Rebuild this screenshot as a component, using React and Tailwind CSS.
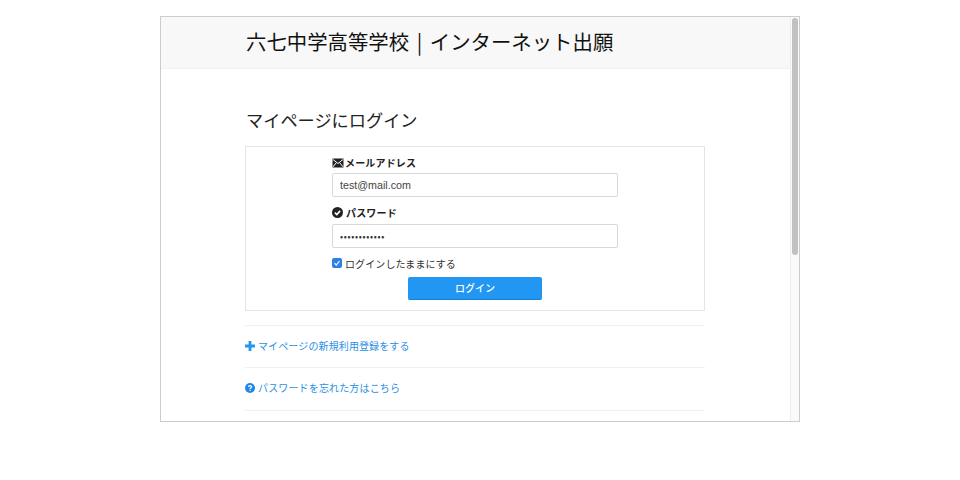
const jp = "font-['Noto_Sans_CJK_JP','Liberation_Sans',sans-serif]";

function Mail() {
  return (
    <svg width="12" height="10" viewBox="0 0 12 10" className="shrink-0">
      <rect x="0.5" y="0.5" width="11" height="9" fill="#222" />
      <path d="M1 1.5 L6 5.5 L11 1.5 M1 8.8 L4.4 4.6 M11 8.8 L7.6 4.6" fill="none" stroke="#fff" strokeWidth="1" />
    </svg>
  );
}

function CheckCircle() {
  return (
    <svg width="11" height="11" viewBox="0 0 11 11" className="shrink-0">
      <circle cx="5.5" cy="5.5" r="5.5" fill="#222" />
      <path d="M2.9 5.6 L4.8 7.5 L8.1 3.9" fill="none" stroke="#fff" strokeWidth="1.6" />
    </svg>
  );
}

function Plus() {
  return (
    <svg width="10" height="10" viewBox="0 0 10 10" className="shrink-0">
      <path d="M3.6 0h2.8v3.6H10v2.8H6.4V10H3.6V6.4H0V3.6h3.6z" fill="#2196f3" />
    </svg>
  );
}

function Question() {
  return (
    <svg width="10" height="10" viewBox="0 0 10 10" className="shrink-0">
      <circle cx="5" cy="5" r="5" fill="#1e88e5" />
      <path d="M3.5 3.9 C3.5 2.2 6.6 2.2 6.6 3.8 C6.6 4.9 5 4.9 5 6" fill="none" stroke="#fff" strokeWidth="1.2" />
      <rect x="4.4" y="6.7" width="1.2" height="1.2" fill="#fff" />
    </svg>
  );
}

export default function App() {
  return (
    <div className={`${jp} h-[480px] bg-white pt-4 text-[#222]`}>
      <div className="mx-auto flex h-[406px] w-[640px] overflow-hidden border border-[#cccccc]">
        <main className="flex-1 overflow-hidden">
          <header className="h-[52px] border-b border-[#f0f0f0] bg-[#f8f8f8] pl-[85px]">
            <h1 className="text-[20.4px] leading-[49px] font-normal whitespace-nowrap text-[#111] [word-spacing:3px]">
              六七中学高等学校 | インターネット出願
            </h1>
          </header>
          <div className="ml-[84px] w-[460px]">
            <h2 className="mt-[37px] h-[40px] pl-px text-[17.2px] leading-[28px] font-normal text-[#222]">
              マイページにログイン
            </h2>
            <section className="flex h-[165px] flex-col border border-[#e4e4e4] pt-[8px] pl-[86px]">
              <label className="flex h-[15px] items-center gap-[1px] text-[10px] font-bold tracking-[0.17px]">
                <Mail />
                メールアドレス
              </label>
              <input
                readOnly
                value="test@mail.com"
                className="mt-[3px] h-[24px] w-[286px] rounded-[2px] border border-[#d8d8d8] px-[7px] font-['Liberation_Sans',sans-serif] text-[10.7px] text-[#444] outline-none"
              />
              <label className="mt-[8px] flex h-[15px] items-center gap-[3px] text-[10px] font-bold tracking-[0.17px]">
                <CheckCircle />
                パスワード
              </label>
              <input
                readOnly
                type="password"
                value="test12345678"
                className="mt-[4px] h-[24px] w-[286px] rounded-[2px] border border-[#d8d8d8] px-[7px] text-[9px] tracking-[0.7px] text-[#333] outline-none"
              />
              <div className="mt-[7px] flex h-[16px] items-center gap-[3px] text-[10px] tracking-[0.1px] text-[#333]">
                <span className="flex h-[10px] w-[10px] items-center justify-center rounded-[2px] bg-[#2f80e4]">
                  <svg width="8" height="8" viewBox="0 0 8 8">
                    <path d="M1.5 4.2 L3.3 6 L6.5 2" fill="none" stroke="#fff" strokeWidth="1.2" />
                  </svg>
                </span>
                ログインしたままにする
              </div>
              <button className="mt-[6px] ml-[76px] h-[23px] w-[134px] rounded-[2px] border-b border-[#1a80d0] bg-[#2196f3] pb-[2px] text-[10px] font-medium text-white">
                ログイン
              </button>
            </section>
            <a className="mt-[14px] flex h-[42px] items-center gap-[3px] border-t border-[#f0f0f0] pb-[2px] text-[10px] tracking-[0.12px] text-[#2b8fe6]">
              <Plus />
              マイページの新規利用登録をする
            </a>
            <a className="flex h-[43px] items-center gap-[3px] border-t border-[#f0f0f0] pb-[3px] text-[10px] tracking-[0.15px] text-[#2b8fe6]">
              <Question />
              パスワードを忘れた方はこちら
            </a>
            <div className="border-t border-[#f0f0f0]" />
          </div>
        </main>
        <aside className="w-[9px] shrink-0 border-l border-[#eeeeee] bg-[#fafafa] pt-px pl-[1px]">
          <div className="h-[237px] w-[6px] rounded-[3px] bg-[#c1c1c1]" />
        </aside>
      </div>
    </div>
  );
}
